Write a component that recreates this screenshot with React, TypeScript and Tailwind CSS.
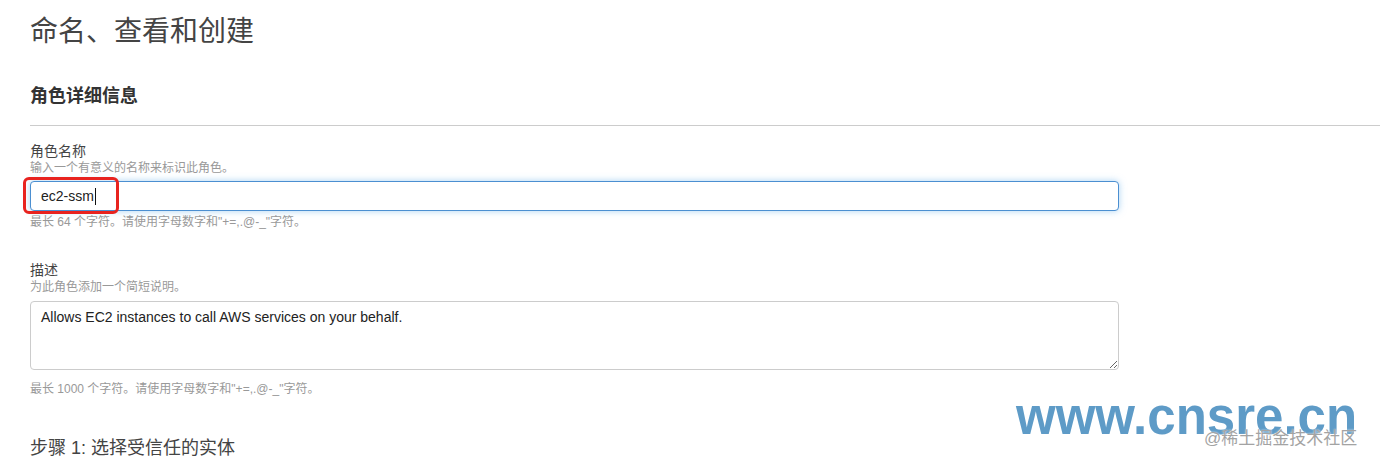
import React from 'react'

const font = { fontFamily: '"Liberation Sans", Arial, "Noto Sans CJK SC", sans-serif' }

const Hint = ({ children, className = '' }: { children: React.ReactNode; className?: string }) => (
  <div className={`text-[12px] leading-[16px] text-[#999] ${className}`}>{children}</div>
)

export default function App() {
  return (
    <div className="relative h-[464px] w-[1380px] overflow-hidden bg-white pl-[30px] text-[#444]" style={font}>
      <h1 className="pt-[16px] text-[28px] leading-[32px] font-normal text-[#444]">命名、查看和创建</h1>

      <h2 className="mt-[36px] text-[18px] leading-[24px] font-bold text-[#333]">角色详细信息</h2>
      <div className="mt-[17px] h-px bg-[#ccc]" />

      <div className="mt-[16px] text-[14px] leading-[18px]">角色名称</div>
      <Hint>输入一个有意义的名称来标识此角色。</Hint>
      <div className="relative mt-[5px] w-[1089px]">
        <div className="flex h-[30px] items-center rounded-[4px] border border-[#4b8fd1] bg-white px-[10px] text-[14px] text-[#222] shadow-[0_0_7px_rgba(102,175,233,0.55)]">
          ec2-ssm
          <span className="ml-px inline-block h-[17px] w-px bg-[#111]" />
        </div>
        <div className="absolute top-[-4px] left-[-7px] h-[37px] w-[96px] rounded-[6px] border-[3px] border-[#e8231f]" />
      </div>
      <Hint className="mt-[3px]">最长 64 个字符。请使用字母数字和"+=,.@-_"字符。</Hint>

      <div className="mt-[31px] text-[14px] leading-[18px]">描述</div>
      <Hint>为此角色添加一个简短说明。</Hint>
      <textarea
        readOnly
        defaultValue="Allows EC2 instances to call AWS services on your behalf."
        className="mt-[6px] block h-[69px] w-[1089px] resize-y rounded-[4px] border border-[#ccc] px-[10px] py-[5px] text-[14px] leading-[20px] text-[#222] outline-none"
        style={font}
      />
      <Hint className="mt-[11px]">最长 1000 个字符。请使用字母数字和"+=,.@-_"字符。</Hint>

      <div className="mt-[37px] text-[18px] leading-[28px] text-[#444]">步骤 1: 选择受信任的实体</div>

      <div className="pointer-events-none absolute top-[387px] left-[1016px] text-[51px] leading-[60px] font-bold text-[#5e9bc7]">
        www.cnsre.cn
      </div>
      <div className="pointer-events-none absolute top-[428px] left-[1204px] text-[17px] leading-[22px] text-[#a3a3a3] [text-shadow:0_0_2px_#fff]">
        @稀土掘金技术社区
      </div>
    </div>
  )
}
